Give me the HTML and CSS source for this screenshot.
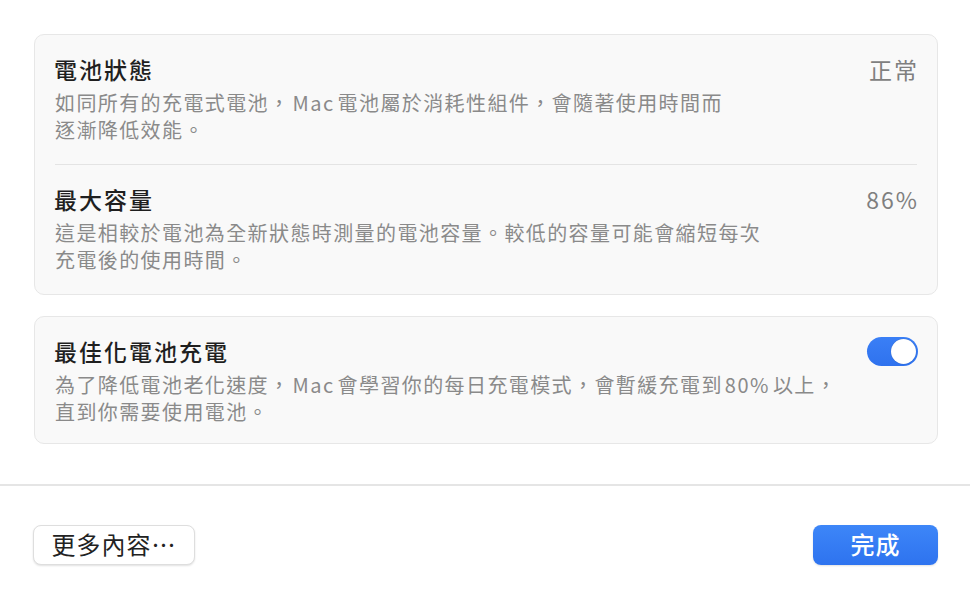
FILE: index.html
```html
<!DOCTYPE html>
<html lang="zh-Hant">
<head>
<meta charset="utf-8">
<title>電池健康度</title>
<link rel="stylesheet" href="styles.css">
</head>
<body>
<main class="page">
  <section class="card">
    <div class="row">
      <div class="text">
        <div class="title">電池狀態</div>
        <div class="desc">如同所有的充電式電池，<span class="lat">Mac</span>電池屬於消耗性組件，會隨著使用時間而<br>逐漸降低效能。</div>
      </div>
      <div class="value">正常</div>
    </div>
    <div class="sep"></div>
    <div class="row">
      <div class="text">
        <div class="title">最大容量</div>
        <div class="desc">這是相較於電池為全新狀態時測量的電池容量。較低的容量可能會縮短每次<br>充電後的使用時間。</div>
      </div>
      <div class="value">86%</div>
    </div>
  </section>
  <section class="card card-toggle">
    <div class="row">
      <div class="text">
        <div class="title">最佳化電池充電</div>
        <div class="desc">為了降低電池老化速度，<span class="lat">Mac</span>會學習你的每日充電模式，會暫緩充電到<span class="lat">80%</span>以上，<br>直到你需要使用電池。</div>
      </div>
      <div class="toggle"><div class="knob"></div></div>
    </div>
  </section>
</main>
<div class="divider"></div>
<footer class="footer">
  <button class="btn btn-plain">更多內容⋯</button>
  <button class="btn btn-primary">完成</button>
</footer>
</body>
</html>
```
FILE: styles.css
```css
html, body {
  margin: 0;
  padding: 0;
  background: #ffffff;
}
body {
  width: 970px;
  height: 600px;
  overflow: hidden;
  font-family: "Noto Sans CJK TC", "Noto Sans", sans-serif;
  color: #222222;
}
.page {
  padding: 34px 32px 0 34px;
  display: flex;
  flex-direction: column;
  gap: 21px;
}
.card {
  background: #f9f9f9;
  border: 1px solid #e7e7e7;
  border-radius: 10px;
  padding: 0 20px;
  box-sizing: border-box;
}
.row {
  display: flex;
  align-items: flex-start;
  padding: 21px 0 21px;
}
.card-toggle .row {
  padding: 21px 0 18px;
}
.text {
  flex: 1;
}
.title {
  font-size: 23px;
  line-height: 27px;
  letter-spacing: 2px;
  font-weight: 500;
  color: #1f1f1f;
  margin-left: -1px;
}
.desc {
  margin-top: 6px;
  font-size: 20px;
  line-height: 27px;
  letter-spacing: 1.4px;
  color: #8a8a8a;
  white-space: nowrap;
}
.lat {
  letter-spacing: 1.5px;
  margin: 0 3px 0 2px;
}
.value {
  font-size: 23px;
  line-height: 27px;
  letter-spacing: 2px;
  color: #7f7f7f;
  margin-right: -2px;
}
.sep {
  height: 1px;
  background: #e4e4e4;
}
.toggle {
  width: 51px;
  height: 29px;
  border-radius: 15px;
  background: linear-gradient(#3a7ff6, #2f72ee);
  margin-top: -1px;
  margin-right: -1px;
  display: flex;
  justify-content: flex-end;
  align-items: center;
  padding: 0 2px;
  box-sizing: border-box;
}
.knob {
  width: 25px;
  height: 25px;
  border-radius: 50%;
  background: #ffffff;
  box-shadow: 0 0 1px rgba(0,0,0,0.3);
}
.divider {
  margin-top: 40px;
  height: 2px;
  background: #e5e5e5;
}
.footer {
  display: flex;
  justify-content: space-between;
  padding: 39px 32px 0 33px;
}
.btn {
  font-family: "Noto Sans CJK TC", "Noto Sans", sans-serif;
  font-size: 24px;
  line-height: 28px;
  height: 40px;
  border-radius: 8px;
  padding: 0 0 3px;
  letter-spacing: 1px;
  box-sizing: border-box;
  display: flex;
  align-items: center;
  justify-content: center;
}
.btn-plain {
  width: 162px;
  background: #ffffff;
  border: 1px solid #dedede;
  box-shadow: 0 1px 2px rgba(0,0,0,0.12);
  color: #222222;
}
.btn-primary {
  width: 125px;
  background: linear-gradient(#3d86f8, #2e73ef);
  border: none;
  color: #ffffff;
  font-weight: 500;
  box-shadow: 0 1px 2px rgba(0,0,0,0.12);
}
```
